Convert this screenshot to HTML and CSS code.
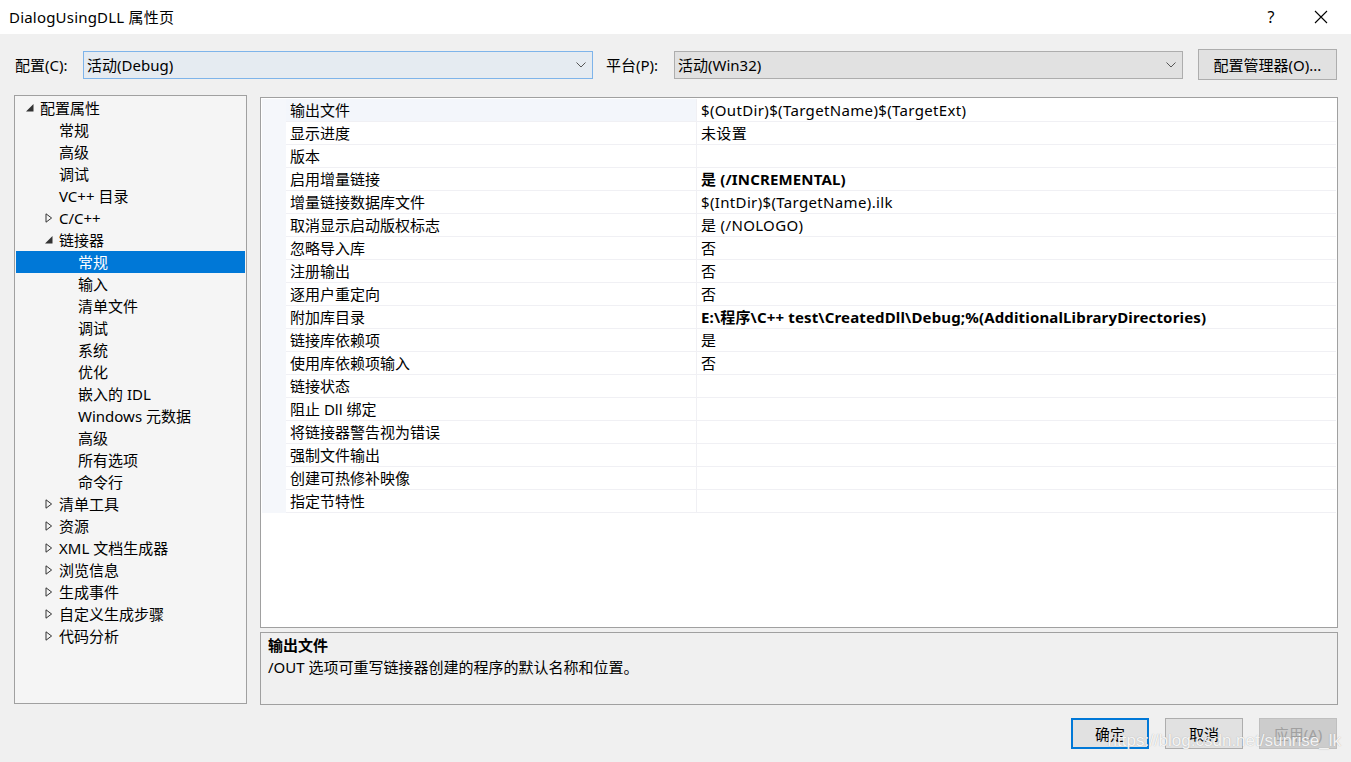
FILE: index.html
```html
<!DOCTYPE html>
<html lang="zh-CN">
<head>
<meta charset="utf-8">
<title>DialogUsingDLL 属性页</title>
<link rel="stylesheet" href="styles.css">
</head>
<body>
<div class="dialog">
  <div class="titlebar">
    <span class="title">DialogUsingDLL 属性页</span>
    <div class="tb-btns">
      <span class="tb-help">?</span>
      <svg class="tb-close" width="14" height="14" viewBox="0 0 14 14"><path d="M1 1L13 13M13 1L1 13" stroke="#000" stroke-width="1.1" fill="none"/></svg>
    </div>
  </div>
  <div class="content">
    <div class="toprow">
      <span class="lbl lbl-config">配置(C):</span>
      <div class="combo combo-focus">
        <span>活动(Debug)</span>
        <svg width="10" height="6" viewBox="0 0 10 6"><path d="M0.5 0.5L5 5L9.5 0.5" stroke="#555" fill="none"/></svg>
      </div>
      <span class="lbl lbl-plat">平台(P):</span>
      <div class="combo combo-plat">
        <span>活动(Win32)</span>
        <svg width="10" height="6" viewBox="0 0 10 6"><path d="M0.5 0.5L5 5L9.5 0.5" stroke="#555" fill="none"/></svg>
      </div>
      <div class="btn btn-mgr">配置管理器(O)...</div>
    </div>
    <div class="main">
      <div class="tree">
        <div class="ti l0"><svg class="exp" width="8" height="8" viewBox="0 0 8 8"><path d="M7.5 0V7.5H0Z" fill="#333"/></svg>配置属性</div>
        <div class="ti l1">常规</div>
        <div class="ti l1">高级</div>
        <div class="ti l1">调试</div>
        <div class="ti l1">VC++ 目录</div>
        <div class="ti l1"><svg class="col" width="8" height="10" viewBox="0 0 8 10"><path d="M1 0.8V9.2L6.6 5Z" fill="none" stroke="#333" stroke-width="1"/></svg>C/C++</div>
        <div class="ti l1"><svg class="exp" width="8" height="8" viewBox="0 0 8 8"><path d="M7.5 0V7.5H0Z" fill="#333"/></svg>链接器</div>
        <div class="ti l2 sel">常规</div>
        <div class="ti l2">输入</div>
        <div class="ti l2">清单文件</div>
        <div class="ti l2">调试</div>
        <div class="ti l2">系统</div>
        <div class="ti l2">优化</div>
        <div class="ti l2">嵌入的 IDL</div>
        <div class="ti l2">Windows 元数据</div>
        <div class="ti l2">高级</div>
        <div class="ti l2">所有选项</div>
        <div class="ti l2">命令行</div>
        <div class="ti l1"><svg class="col" width="8" height="10" viewBox="0 0 8 10"><path d="M1 0.8V9.2L6.6 5Z" fill="none" stroke="#333" stroke-width="1"/></svg>清单工具</div>
        <div class="ti l1"><svg class="col" width="8" height="10" viewBox="0 0 8 10"><path d="M1 0.8V9.2L6.6 5Z" fill="none" stroke="#333" stroke-width="1"/></svg>资源</div>
        <div class="ti l1"><svg class="col" width="8" height="10" viewBox="0 0 8 10"><path d="M1 0.8V9.2L6.6 5Z" fill="none" stroke="#333" stroke-width="1"/></svg>XML 文档生成器</div>
        <div class="ti l1"><svg class="col" width="8" height="10" viewBox="0 0 8 10"><path d="M1 0.8V9.2L6.6 5Z" fill="none" stroke="#333" stroke-width="1"/></svg>浏览信息</div>
        <div class="ti l1"><svg class="col" width="8" height="10" viewBox="0 0 8 10"><path d="M1 0.8V9.2L6.6 5Z" fill="none" stroke="#333" stroke-width="1"/></svg>生成事件</div>
        <div class="ti l1"><svg class="col" width="8" height="10" viewBox="0 0 8 10"><path d="M1 0.8V9.2L6.6 5Z" fill="none" stroke="#333" stroke-width="1"/></svg>自定义生成步骤</div>
        <div class="ti l1"><svg class="col" width="8" height="10" viewBox="0 0 8 10"><path d="M1 0.8V9.2L6.6 5Z" fill="none" stroke="#333" stroke-width="1"/></svg>代码分析</div>
      </div>
      <div class="right">
        <div class="grid">
          <div class="rows">
            <div class="row cur"><div class="gut"></div><div class="name">输出文件</div><div class="val">$(OutDir)$(TargetName)$(TargetExt)</div></div>
            <div class="row"><div class="gut"></div><div class="name">显示进度</div><div class="val">未设置</div></div>
            <div class="row"><div class="gut"></div><div class="name">版本</div><div class="val"></div></div>
            <div class="row"><div class="gut"></div><div class="name">启用增量链接</div><div class="val b">是 (/INCREMENTAL)</div></div>
            <div class="row"><div class="gut"></div><div class="name">增量链接数据库文件</div><div class="val">$(IntDir)$(TargetName).ilk</div></div>
            <div class="row"><div class="gut"></div><div class="name">取消显示启动版权标志</div><div class="val">是 (/NOLOGO)</div></div>
            <div class="row"><div class="gut"></div><div class="name">忽略导入库</div><div class="val">否</div></div>
            <div class="row"><div class="gut"></div><div class="name">注册输出</div><div class="val">否</div></div>
            <div class="row"><div class="gut"></div><div class="name">逐用户重定向</div><div class="val">否</div></div>
            <div class="row"><div class="gut"></div><div class="name">附加库目录</div><div class="val b">E:\程序\C++ test\CreatedDll\Debug;%(AdditionalLibraryDirectories)</div></div>
            <div class="row"><div class="gut"></div><div class="name">链接库依赖项</div><div class="val">是</div></div>
            <div class="row"><div class="gut"></div><div class="name">使用库依赖项输入</div><div class="val">否</div></div>
            <div class="row"><div class="gut"></div><div class="name">链接状态</div><div class="val"></div></div>
            <div class="row"><div class="gut"></div><div class="name">阻止 Dll 绑定</div><div class="val"></div></div>
            <div class="row"><div class="gut"></div><div class="name">将链接器警告视为错误</div><div class="val"></div></div>
            <div class="row"><div class="gut"></div><div class="name">强制文件输出</div><div class="val"></div></div>
            <div class="row"><div class="gut"></div><div class="name">创建可热修补映像</div><div class="val"></div></div>
            <div class="row"><div class="gut"></div><div class="name">指定节特性</div><div class="val"></div></div>
          </div>
        </div>
        <div class="desc">
          <div class="desc-title">输出文件</div>
          <div class="desc-text">/OUT 选项可重写链接器创建的程序的默认名称和位置。</div>
        </div>
      </div>
    </div>
    <div class="footer">
      <div class="btn btn-ok">确定</div>
      <div class="btn">取消</div>
      <div class="btn btn-dis">应用(A)</div>
      <span class="watermark">https://blog.csdn.net/sunrise_lk</span>
    </div>
  </div>
</div>
</body>
</html>
```
FILE: styles.css
```css
* { box-sizing: border-box; }
html, body { margin: 0; padding: 0; }
body {
  width: 1351px;
  height: 762px;
  overflow: hidden;
  font-family: "Noto Sans", "Noto Sans CJK SC", sans-serif;
  font-size: 15px;
  color: #000;
  background: #f0f0f0;
}
.dialog { width: 1351px; height: 762px; display: flex; flex-direction: column; }
.titlebar {
  height: 34px;
  background: #fff;
  display: flex;
  align-items: center;
  justify-content: space-between;
  padding: 0 0 0 9px;
}
.title { font-size: 15px; line-height: 20px; letter-spacing: 0.2px; }
.tb-btns { display: flex; align-items: center; }
.tb-help { width: 30px; text-align: center; margin-right: 28px; font-size: 16px; }
.tb-close { margin-right: 23px; }

.content { flex: 1; display: flex; flex-direction: column; padding: 15px 13px 0 14px; position: relative; }
.toprow { display: flex; align-items: center; height: 31px; }
.lbl { line-height: 20px; }
.lbl-config { margin-left: 1px; width: 68px; }
.lbl-plat { width: 68px; margin-left: 13px; }
.combo {
  height: 28px;
  display: flex;
  align-items: center;
  justify-content: space-between;
  padding: 0 6px 0 3px;
  border: 1px solid #adadad;
  background: #e1e1e1;
  line-height: 20px;
}
.combo-focus { width: 510px; border-color: #7eb4ea; background: #e5ebf1; }
.combo-plat { width: 509px; }
.btn {
  height: 31px;
  width: 78px;
  border: 1px solid #adadad;
  background: #e1e1e1;
  display: flex;
  align-items: center;
  justify-content: center;
  line-height: 20px;
}
.btn-mgr { width: 139px; margin-left: 15px; }

.main { display: flex; margin-top: 15px; height: 609px; }
.tree {
  width: 233px;
  height: 609px;
  border: 1px solid #a0a0a0;
  background: #f5f5f5;
  padding: 1px 1px;
}
.ti {
  height: 22px;
  line-height: 22px;
  position: relative;
  white-space: nowrap;
}
.ti.l0 { padding-left: 24px; }
.ti.l1 { padding-left: 43px; }
.ti.l2 { padding-left: 62px; }
.ti.sel { background: #0078d7; color: #fff; }
.ti svg { position: absolute; }
.ti.l0 .exp { left: 10px; top: 7px; }
.ti.l1 .exp { left: 29px; top: 7px; }
.ti.l1 .col { left: 29px; top: 6px; }

.right { flex: 1; margin-left: 13px; display: flex; flex-direction: column; }
.grid {
  margin-top: 2px;
  height: 531px;
  flex-shrink: 0;
  border: 1px solid #a0a0a0;
  background: #fff;
  padding: 1px;
}
.row { display: flex; height: 23px; }
.gut { width: 24px; background: #f5f7fb; }
.name {
  width: 411px;
  padding-left: 4px;
  line-height: 22px;
  border-bottom: 1px solid #f0f0f4;
  border-right: 1px solid #f0f0f4;
  white-space: nowrap;
}
.row.cur .name { background: #f3f6fb; }
.val {
  flex: 1;
  padding-left: 4px;
  line-height: 22px;
  border-bottom: 1px solid #f0f0f4;
  white-space: nowrap;
  letter-spacing: 0.35px;
}
.val.b { font-weight: bold; letter-spacing: 0.15px; }

.desc {
  margin-top: 4px;
  height: 73px;
  flex-shrink: 0;
  border: 1px solid #a0a0a0;
  background: #f0f0f0;
  padding: 1px 7px;
}
.desc-title { font-weight: bold; line-height: 22px; }
.desc-text { line-height: 22px; margin-top: 0; }

.footer {
  display: flex;
  justify-content: flex-end;
  gap: 16px;
  margin-top: 14px;
  padding-right: 1px;
  position: relative;
}
.btn-ok { border: 2px solid #0078d7; }
.btn-dis { background: #cccccc; border-color: #bfbfbf; color: #a0a0a0; }
.watermark {
  position: absolute;
  right: -3px;
  top: 13px;
  font-family: "Liberation Sans", Arial, sans-serif;
  font-size: 17px;
  color: rgba(255,255,255,0.9);
  text-shadow: 0 0 1px rgba(120,120,120,0.6);
  white-space: nowrap;
}
```
